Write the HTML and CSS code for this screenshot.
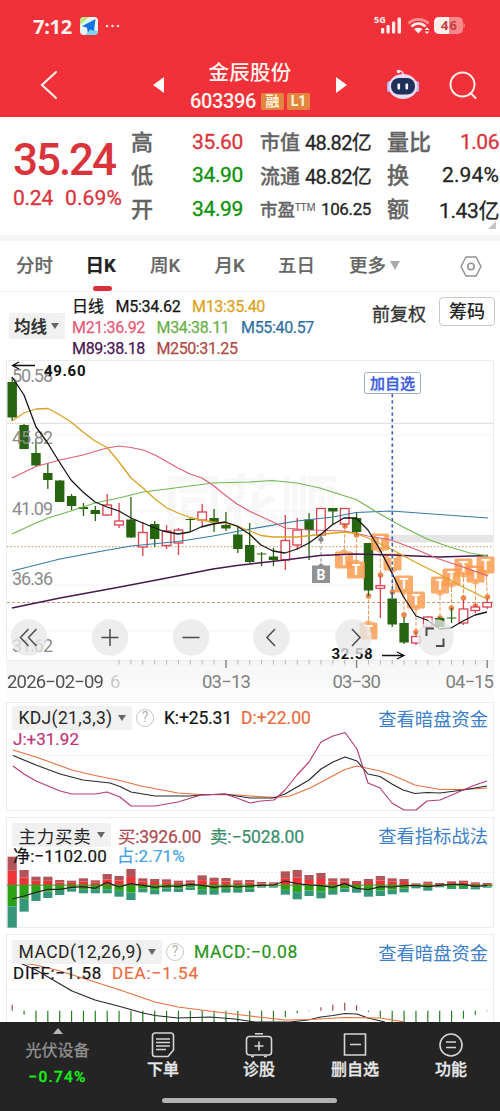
FILE: index.html
```html
<!DOCTYPE html>
<html lang="zh-CN">
<head>
<meta charset="utf-8">
<title>金辰股份 603396</title>
<link rel="stylesheet" href="styles.css">
</head>
<body>
<header class="top">
  <div class="status">
    <span class="time" data-w="39">7:12</span>
    <svg class="app" width="18" height="18" viewBox="0 0 18 18"><rect width="18" height="18" rx="4" fill="#e9f7f3"/><path d="M0 8V4a4 4 0 0 1 4-4h5z" fill="#b9e57d"/><path d="M5 18l6-6 7 2a4 4 0 0 1-4 4z" fill="#7cd3f2"/><path d="M15.5 2L2 9.3l5 1.4.8 5 2.4-3.2 3.8 1.2z" fill="#1673e6"/></svg>
    <svg class="dots" width="15" height="4" viewBox="0 0 15 4" fill="#ffd9d5"><circle cx="2" cy="2" r="1.3"/><circle cx="7.5" cy="2" r="1.3"/><circle cx="13" cy="2" r="1.3"/></svg>
    <svg class="signals" width="96" height="26" viewBox="370 13 96 26">
      <text x="374" y="22.5" class="g5">5G</text>
      <g fill="#fff0ec"><rect x="381" y="28" width="3.2" height="5.5" rx="1"/><rect x="386.5" y="25" width="3.2" height="8.5" rx="1"/><rect x="392" y="21.5" width="3.2" height="12" rx="1"/><rect x="397.6" y="17.5" width="3.4" height="16" rx="1"/></g>
      <g fill="none" stroke-width="2.6"><path d="M408.5 23.5c5.500-5.500 14.500-5.500 20 0" stroke="#f98f8b"/><path d="M411.500 26.500c4-4 10-4 14 0" stroke="#fff0ec"/></g><path d="M414 29q4.500-2.500 8.500 0l-4.200 4.500z" fill="#fff0ec"/><path d="M427 27.300l2.400 2.600h-4.800zM427 34l2.400-2.600h-4.800z" fill="#fff0ec"/>
      <rect x="434" y="17" width="29" height="17" rx="5" fill="#f8898a"/><path d="M449 17h-10a5 5 0 0 0-5 5v7a5 5 0 0 0 5 5h10z" fill="#fff0ec"/><path d="M463.500 22.500q3 3 0 6z" fill="#f8898a"/>
      <text x="441" y="30" class="batt" textLength="16">46</text>
    </svg>
  </div>
  <nav class="nav">
    <svg width="18" height="30" viewBox="0 0 18 30" fill="none" stroke="#fff0e8" stroke-width="2.200" stroke-linecap="round"><path d="M16 2L2 15l14 13"/></svg>
    <svg class="c3" width="11" height="16" viewBox="0 0 11 16"><path d="M11 0v16L0 8z" fill="#fff8f4"/></svg>
    <div class="name">
      <h1 data-w="83">金辰股份</h1>
      <div class="code"><span data-w="66">603396</span><b class="badge">融</b><b class="badge">L1</b></div>
    </div>
    <svg width="11" height="16" viewBox="0 0 11 16"><path d="M0 0v16l11-8z" fill="#fff8f4"/></svg>
    <svg width="34" height="32" viewBox="0 0 34 32"><path d="M12 2q5-.5 5.500 4" fill="none" stroke="#e9d9ee" stroke-width="1.500"/><circle cx="12.500" cy="2.500" r="1.800" fill="#f4e7f2"/><rect x="1" y="12" width="5" height="11" rx="2.500" fill="#b9b4ee"/><rect x="28" y="12" width="5" height="11" rx="2.500" fill="#b9b4ee"/><ellipse cx="17" cy="17.500" rx="14.500" ry="12.500" fill="#e8dcf4"/><rect x="5" y="9" width="24" height="16.500" rx="8" fill="#1d315b"/><rect x="11.500" y="14.500" width="2.600" height="6" rx="1" fill="#fff"/><rect x="19.500" y="14.500" width="2.600" height="6" rx="1" fill="#fff"/></svg>
    <svg width="28" height="28" viewBox="0 0 28 28" fill="none" stroke="#fff0e8" stroke-width="2"><circle cx="13.500" cy="13.500" r="12"/><path d="M21.500 22l5 5" stroke-linecap="round"/></svg>
  </nav>
</header>

<section class="quote">
  <div class="price up">
    <strong data-w="102">35.24</strong>
    <div class="change"><span data-w="40">0.24</span><span data-w="57">0.69%</span></div>
  </div>
  <dl class="col a"><dt>高</dt><dd class="up" data-w="51">35.60</dd><dt>低</dt><dd class="down" data-w="51">34.90</dd><dt>开</dt><dd class="down" data-w="51">34.99</dd></dl>
  <dl class="col b"><dt>市值</dt><dd data-w="66">48.82亿</dd><dt>流通</dt><dd data-w="66">48.82亿</dd><dt class="pe">市盈<sup>TTM</sup></dt><dd class="small" data-w="50">106.25</dd></dl>
  <dl class="col c"><dt>量比</dt><dd class="up" data-w="39">1.06</dd><dt>换</dt><dd data-w="57">2.94%</dd><dt>额</dt><dd data-w="60">1.43亿</dd></dl>
  <i class="corner"></i>
</section>

<nav class="tabs">
  <span>分时</span><span class="on">日K</span><span>周K</span><span>月K</span><span>五日</span><span class="more">更多<i></i></span>
  <svg width="22" height="21" viewBox="0 0 22 21" fill="none" stroke="#929292" stroke-width="1.500"><path d="M6 1h10l5 9.500-5 9.500H6l-5-9.500z" stroke-linejoin="round"/><circle cx="11" cy="10.500" r="3.200"/></svg>
</nav>

<section class="legend">
  <button class="chip ma">均线<i></i></button>
  <div class="mas">
    <div><span class="k" data-w="32">日线</span><span class="k" data-w="65">M5:34.62</span><span class="m13" data-w="73">M13:35.40</span></div>
    <div><span class="m21" data-w="73">M21:36.92</span><span class="m34" data-w="73">M34:38.11</span><span class="m55" data-w="73">M55:40.57</span></div>
    <div><span class="m89" data-w="73">M89:38.18</span><span class="m250" data-w="81">M250:31.25</span></div>
  </div>
  <span class="adj">前复权</span>
  <button class="chips">筹码</button>
</section>

<svg id="kline" width="500" height="344" viewBox="0 356 500 344"></svg>

<section class="panel p1">
  <svg id="kdj" width="500" height="115" viewBox="0 700 500 115"></svg>
  <div class="head">
    <button class="chip wide"><span data-w="94">KDJ(21,3,3)</span><i></i></button><em>?</em>
    <span class="k" data-w="68">K:+25.31</span><span class="or" data-w="70">D:+22.00</span><a>查看暗盘资金</a>
  </div>
  <div class="sub"><span class="pk" data-w="66">J:+31.92</span></div>
</section>
<section class="panel p2">
  <svg id="flow" width="500" height="117" viewBox="0 815 500 117"></svg>
  <div class="head">
    <button class="chip wide"><span data-w="73">主力买卖</span><i></i></button>
    <span class="buy" data-w="83">买:3926.00</span><span class="sell" data-w="94">卖:−5028.00</span><a>查看指标战法</a>
  </div>
  <div class="sub"><span class="k" data-w="94">净:−1102.00</span><span class="bl" data-w="68">占:2.71%</span></div>
</section>
<section class="panel p3">
  <svg id="macd" width="500" height="90" viewBox="0 932 500 90"></svg>
  <div class="head">
    <button class="chip wide"><span data-w="124">MACD(12,26,9)</span><i></i></button><em>?</em>
    <span class="gr" data-w="104">MACD:−0.08</span><a>查看暗盘资金</a>
  </div>
  <div class="sub"><span class="k" data-w="89">DIFF:−1.58</span><span class="or" data-w="87">DEA:−1.54</span></div>
</section>

<footer class="bottom">
  <div class="actions">
    <div class="sector"><i></i><span>光伏设备</span><b data-w="58">−0.74%</b></div>
    <div><svg width="24" height="26" viewBox="0 0 24 26"><path d="M4 1h16a2.500 2.500 0 0 1 2.500 2.500V18l-5.500 6.500H4A2.500 2.500 0 0 1 1.500 22V3.500A2.500 2.500 0 0 1 4 1zM5 7h14M5 10.500h14M5 14h14M5 17.500h10"/></svg><span>下单</span></div>
    <div><svg width="28" height="26" viewBox="0 0 28 26"><rect x="1.500" y="4.500" width="25" height="18.500" rx="3"/><path d="M10 1.700h8M14 9.500v9M9.500 14h9M6 24.500h3M19 24.500h3"/></svg><span>诊股</span></div>
    <div><svg width="24" height="26" viewBox="0 0 24 26"><path d="M1.500 2h21v21h-21zM7 12.500h11"/></svg><span>删自选</span></div>
    <div><svg width="26" height="26" viewBox="0 0 26 26"><circle cx="13" cy="13" r="11"/><path d="M8 10h10M8 15.500h10"/></svg><span>功能</span></div>
  </div>
  <div class="home"></div>
</footer>
<script src="charts.js"></script>
</body>
</html>
```
FILE: styles.css
```css
* { box-sizing: border-box; }
body { margin: 0; width: 500px; height: 1111px; overflow: hidden; background: #fff; color: #333; font-family: Roboto, "Noto Sans CJK SC", sans-serif; }
button { border: 0; font: inherit; color: inherit; padding: 0; }
svg { display: block; }
span, a, h1, strong { white-space: nowrap; }
.up { color: #d9343c; }
.down { color: #0c920c; }

.top { height: 117px; background: #f13139; color: #fff4ee; }
.status { height: 52px; display: flex; align-items: center; padding: 0 34px 0 33px; }
.time { font: 700 20px "Noto Sans", sans-serif; }
.app { margin-left: 8px; }
.dots { margin-left: 7px; }
.signals { margin-left: auto; }
.g5 { font: 700 9px "Noto Sans", sans-serif; fill: #fff0ec; }
.batt { font: 700 13px "Noto Sans", sans-serif; fill: #c83c40; }
.nav { height: 65px; display: grid; grid-template-columns: 97px 91px 124px 59px 64px 56px; justify-items: center; align-items: center; }
.nav .c3 { margin-left: 31px; }
.name { display: flex; flex-direction: column; align-items: center; padding-top: 5px; }
.name h1 { margin: 0; font-size: 20.5px; font-weight: 500; line-height: 28px; }
.code { display: flex; align-items: center; gap: 3px; font-size: 20px; font-weight: 500; line-height: 29px; height: 29px; }
.code span { margin-right: 2px; }
.badge { width: 23px; height: 17px; border-radius: 2px; background: #e2863f; color: #fff3dc; font-size: 14px; line-height: 17px; text-align: center; }

.quote { height: 124px; border-bottom: 6px solid #f5f5f5; display: flex; padding-top: 8px; position: relative; }
.price { width: 119px; padding: 8px 0 0 13px; }
.price strong { display: block; font-size: 44px; line-height: 54px; font-weight: 500; }
.change { display: flex; gap: 12px; font-size: 21px; line-height: 23px; -webkit-text-stroke: .3px; }
.col { margin: 0; display: grid; grid-template-columns: auto auto; grid-auto-rows: 33.5px; justify-content: space-between; align-items: center; color: #262626; }
.col dt { color: #636363; font-size: 20px; font-weight: 500; white-space: nowrap; -webkit-text-stroke: .3px; }
.col dd { margin: 0; font-size: 21px; text-align: right; justify-self: end; white-space: nowrap; -webkit-text-stroke: .3px; }
.col dd.up { color: #d9343c; }
.col dd.down { color: #0c920c; }
.a { width: 112px; margin-left: 12px; }
.a dt, .c dt { font-size: 22px; padding-bottom: 4px; }
.b { width: 111px; margin-left: 17px; }
.b dt { width: 40px; }
.b dd { font-size: 20px; }
.b .pe { font-size: 17.5px; }
.b sup { font-size: 10px; line-height: 1; vertical-align: 5px; font-family: "Noto Sans"; -webkit-text-stroke: 0; }
.b dd.small { font-size: 17px; }
.c { width: 112px; margin-left: 16px; }
.corner { position: absolute; right: 4px; bottom: 6px; border-left: 8px solid transparent; border-bottom: 8px solid #c4c4c4; }

.tabs { height: 51px; border-bottom: 1px solid #f3f3f3; display: flex; align-items: center; padding-left: 16px; font-size: 18.5px; font-weight: 500; color: #666; -webkit-text-stroke: .2px; }
.tabs span { width: 63.5px; height: 50px; margin-right: 1px; line-height: 50px; }
.tabs .on { color: #222; font-weight: 700; position: relative; margin-left: 5px; }
.tabs .on::after { content: ""; position: absolute; left: 7px; bottom: 0; width: 19px; height: 5px; border-radius: 3px; background: #d9303b; }
.tabs span:nth-child(5) { width: 70px; margin-left: -1px; }
.tabs .more { width: 110px; }
.more i { display: inline-block; margin-left: 4px; border: 5px solid transparent; border-top: 9px solid #aaa; border-bottom: 0; vertical-align: 2px; }

.legend { height: 64px; display: flex; align-items: flex-start; padding-top: 4px; }
.chip { background: #f1f1f1; display: flex; align-items: center; gap: 5px; border-radius: 2px; }
.chip i { border: 4.500px solid transparent; border-top: 6px solid #666; border-bottom: 0; }
.ma { margin: 17px 0 0 9px; width: 56px; height: 26px; padding-left: 5px; font-size: 16.5px; font-weight: 700; color: #333; gap: 4px; }
.mas { margin-left: 7px; width: 300px; font-size: 16px; line-height: 21px; height: 63px; -webkit-text-stroke: .25px; }
.mas div { display: flex; gap: 11.5px; height: 21px; }
.k { color: #141414; } .m13 { color: #dca21b; } .m21 { color: #e35c76; } .m34 { color: #6ab04b; } .m55 { color: #2f6f9f; } .m89 { color: #4a1757; } .m250 { color: #ad4a45; }
.adj { font-size: 18px; line-height: 37px; color: #333; width: 55px; -webkit-text-stroke: .3px; }
.chips { margin-left: 12px; margin-top: 1px; width: 56px; height: 29px; border: 1px solid #c9c9c9; border-radius: 4px; background: #fff; color: #222; font-size: 18px; font-weight: 500; line-height: 26px; }

.panel { display: grid; }
.panel > svg { grid-area: 1 / 1; }
.panel .head { grid-area: 1 / 1; margin: 6px 12px 0; height: 24px; display: flex; align-items: center; font-size: 17.5px; z-index: 1; }
.panel .sub { grid-area: 1 / 1; margin: 29px 0 0 13px; height: 20px; line-height: 20px; display: flex; font-size: 17px; gap: 10px; }
.panel .head > span, .panel .sub { -webkit-text-stroke: .2px; }
.p1 { height: 115px; } .p2 { height: 117px; } .p3 { height: 90px; overflow: hidden; }
.p2 .head, .p3 .head { margin-top: 8px; }
.p2 .sub, .p3 .sub { margin-top: 31px; }
.wide { height: 24px; padding: 0 6.500px; color: #262626; }
.head em { width: 18px; height: 18px; border: 1.500px solid #c7c7c7; border-radius: 50%; color: #b5b5b5; font: 14px/15px Roboto; text-align: center; margin: 0 10px 0 4px; }
.head > span { margin-right: 9px; }
.p2 .wide { margin-right: 7px; }
.head a { margin-left: auto; color: #3e80c8; font-size: 18.300px; }
.or { color: #ec6b3e; } .pk { color: #be3578; } .buy { color: #ad4c4e; } .sell { color: #388e68; } .bl { color: #43a3e6; } .gr { color: #2a941c; }

.bottom { height: 89px; background: #242424; color: #e9e9e9; }
.actions { display: grid; grid-template-columns: 115px 96px 96px 96px 96px; height: 76px; }
.actions div { display: flex; flex-direction: column; align-items: center; padding-top: 10px; font-size: 16px; font-weight: 500; line-height: 22px; -webkit-text-stroke: .3px; }
.actions svg { fill: none; stroke: #d5d5d5; stroke-width: 1.600; margin-bottom: 1px; }
.actions .sector { padding-top: 6px; color: #929292; font-weight: 400; }
.sector i { border: 5.500px solid transparent; border-bottom: 6px solid #b7b7b7; border-top: 0; margin-bottom: 6px; }
.sector b { color: #16ee16; font-size: 15.500px; font-weight: 500; margin-top: 4px; }
.home { width: 175px; height: 5px; border-radius: 3px; background: #b2b2b2; margin-left: 162px; }

.axis { font: 18px Roboto; fill: #8c8c8c; }
.date { font: 18.500px Roboto; fill: #808080; }
.mark { font: 700 15px Roboto; fill: #111; }
.pin { font: 700 14px Roboto; fill: #fff; text-anchor: middle; }
.add { font: 500 15px "Noto Sans CJK SC"; fill: #3c5cdb; stroke: #3c5cdb; stroke-width: .3; }
.water { font: 700 58px "Noto Sans CJK SC"; fill: #f8f8f8; }
```
FILE: charts.js
```js
document.querySelectorAll('[data-w]').forEach(function (el) {
  var range = document.createRange();
  range.selectNodeContents(el);
  var w = range.getBoundingClientRect().width;
  el.style.letterSpacing = ((+el.dataset.w - w) / el.textContent.length) + 'px';
});

function X(i) { return 12.2 + i * 11.875; }
function rect(x, y, w, h, fill, extra) { return '<rect x="' + x + '" y="' + y + '" width="' + w + '" height="' + h + '" fill="' + fill + '" ' + (extra || '') + '/>'; }
function seg(x1, y1, x2, y2, c, extra) { return '<path d="M' + x1 + ' ' + y1 + 'L' + x2 + ' ' + y2 + '" fill="none" stroke="' + c + '" ' + (extra || '') + '/>'; }
function poly(p, c, w) { return '<polyline points="' + p + '" fill="none" stroke="' + c + '" stroke-width="' + (w || 1.15) + '" stroke-linejoin="round"/>'; }
function text(x, y, w, cls, s) { return '<text x="' + x + '" y="' + y + '" textLength="' + w + '" class="' + cls + '">' + s + '</text>'; }
function frame(y, h) { return rect(6.5, y, 487, h, 'none', 'stroke="#ececec"'); }

// Candles: direction, body top, body bottom, high, low
var candles = [
  [0,382,417.5,377,421],[0,425,449,424,449],[0,453,465.5,441,466],[0,473,480,463,489],[0,480.5,502,480,502],[0,496,506,494,510],[0,507,509,503,516],[0,510,514,506,521],
  [1,505,515,494,516],[1,521,525,503,528],[0,519.5,537.5,497,538],[1,532.5,547,522,556],[0,524,539,521,547],[1,531,545.5,525,549],[1,530,543,528,555],[0,519,520,518,531],
  [1,512,520,504,526],[0,518,522.5,509,532],[0,525,528.5,512,531],[0,534.5,549,526,553],[0,545,562,523,563],[0,553.5,554.5,552,566],[0,556.5,560,548,566],[1,540.5,560,515,570],
  [1,530,545,518,550],[0,519.5,530,513,560],[1,508.5,535,508,535],[0,508,511.5,508,524],[1,508.5,524,508,527],[0,518,532,513,535],[0,543,590.5,543,596],[1,585.7,588.3,575,618],
  [0,598.5,624.5,592,627],[0,623,642.5,617,644],[1,636.5,643,632,645],[1,617,627,616,629],[0,618,627,617,627],[0,617.5,618.5,608,623],[1,609,623,600,625],[1,607,610.5,604,613],[1,602.5,607,598,609]
];
var s = '<defs><linearGradient id="axisfade" x2="0" y2="1"><stop stop-color="#f5f5f5"/><stop offset="1" stop-color="#fdfdfd"/></linearGradient></defs>';
s += rect(6, 660, 488, 40, 'url(#axisfade)') + frame(360.5, 300);
s += text(164, 523, 174, 'water', '同花顺');
s += seg(7, 423.3, 493, 423.3, '#dcdce0') + [435, 511, 585, 631].map(function (y) { return seg(7, y, 493, y, '#f3f3f3'); }).join('');
s += rect(376, 535, 117, 7.500, '#e5e5e5');
s += seg(7, 546.700, 493, 546.700, '#c99055', 'stroke-dasharray="1.5 2"') + seg(7, 602.500, 493, 602.500, '#c99984', 'stroke-dasharray="3 2"');

// Trade pins: box centre, dot height, anchor x
[[344,560,526,345],[356,570,535,356.500],[368.500,631,596,368.500],[380,542,575,380.500],[392.500,562,592,392.500],[404,584,615,404],[416,600,632,416],[440,585,618,440],[451.500,577,608,451.500],[463.500,567,598,463.500],[475.500,574,606,475.500],[485.500,565,597,487.500]].forEach(function (p) {
  s += seg(p[0], p[1], p[3], p[2], '#ed9b59', 'stroke-dasharray="4 1.500"') + '<circle cx="' + p[3] + '" cy="' + p[2] + '" r="2.800" fill="#e98a4d"/>';
});
candles.forEach(function (c, i) {
  var x = X(i), col = c[0] ? '#dc4150' : '#276410';
  if (c[0]) s += seg(x, c[3], x, c[1], col, 'stroke-width="1.300"') + seg(x, c[2], x, c[4], col, 'stroke-width="1.300"') + rect(x - 4.300, c[1], 8.600, c[2] - c[1], '#fff', 'stroke="' + col + '" stroke-width="1.300"');
  else s += seg(x, c[3], x, c[4], col, 'stroke-width="1.300"') + rect(x - 4.700, c[1], 9.400, c[2] - c[1], col);
});
[[50.58,381.500],[45.82,443.500],[41.09,515],[36.36,585],[31.62,652]].forEach(function (a) { s += text(12, a[1], 41, 'axis', a[0].toFixed(2)); });
[[344,560,-1],[356,570,-1],[368.500,631,-1],[380,542,1],[392.500,562,1],[404,584,1],[416,600,1],[440,585,1],[451.500,577,1],[463.500,567,1],[475.500,574,1],[485.500,565,1]].forEach(function (p) {
  var x = p[0], y = p[1], d = p[2];
  s += rect(x - 9, y - 8.500, 18, 17, '#fa9a4d', 'rx="1.500" opacity=".82"') + '<path d="M' + (x - 5) + ' ' + (y + d * 8.500) + 'h10l-5 ' + d * 2.500 + 'z" fill="#fa9a4d" opacity=".82"/>' + '<text x="' + x + '" y="' + (y + 5) + '" class="pin">T</text>';
});
s += seg(321, 540, 321, 565, '#929292', 'stroke-dasharray="4 2"') + '<path d="M321 535l3 5-3 2.500-3-2.500z" fill="#888"/>' + '<path d="M312 565.500h6l3-2.500 3 2.500h6V583h-18z" fill="#929292"/>' + '<text x="321" y="579.500" class="pin">B</text>';
s += poly('12,608 60,598 120,587 167,578 213,569 237,565.500 250,564 285,560 320,555.500 356,554 391,555 440,557 488,555.500', '#47194e', 1.400);
s += poly('12,571 60,559 97,552 131,546 178,541.500 213,536 250,529 297,521 333,517 356,512.500 391,511 488,518', '#357aa8');
s += poly('12,534 36,523 48,518 71,511 95,503 119,498 143,492 167,489 190,486 213,483 250,482 272,480.500 297,483 320,488 356,499.500 380,514 403,527 427,539 451,547.500 470,553 488,556', '#70b850');
s += poly('12,478 36,466.500 60,460 83,455 107,448 119,446 131,447.500 143,450 155,455 178,468 190,474 202,478 214,486 225,495 237,504 250,511.500 273,522 285,528 309,530 345,531 368,536 391,540 415,549 439,559 463,567 488,576', '#df6076');
s += poly('12,421 24,413 36,409 48,408.500 60,415 71,422 83,432 95,441 107,447.500 119,462 131,478 143,488 155,499 167,508 178,513 190,517.500 201,520 213,522 225,523 237,526 250,531 261,535.500 273,537 297,537 320,534.500 344,532 356,533.500 368,538 391,549 415,562 440,574.500 463,587 487,599', '#d9a225', 1.300);
s += poly('12,377 24,395 36,427 47,442 60,463 71,480 83,492 95,502 107,507 119,511 131,518 150,526 163,531 178,534 190,532 201,527 213,524 225,522 237,526 250,534.500 261,545 273,551 285,553 297,549 309,543 320,535 332,525 344,518 356,518 368,530 379,548 391,571 403,596 416,616 427,620 440,629 451,628 463,621 475,615 487,612', '#161616', 1.300);
s += seg(392.300, 394, 392.300, 600, '#3c5fb4', 'stroke-width="1.600" stroke-dasharray="3.200 3"') + rect(364.500, 372.500, 56, 21, '#fff', 'rx="2" stroke="#9eacd0"') + text(370, 388.500, 45, 'add', '加自选');
s += '<path d="M35 365.500H12.500M19 362l-6.500 3.500 6.500 3.500" fill="none" stroke="#111" stroke-width="1.300"/>' + text(44, 375.500, 41.500, 'mark', '49.60');
s += text(331.500, 658.500, 41, 'mark', '32.58') + '<path d="M382 655.500h22M397 652l7 3.500-7 3.500" fill="none" stroke="#111" stroke-width="1.300"/>';
[29,110,191,271.500,353.500,435.500].forEach(function (x) { s += '<circle cx="' + x + '" cy="637.500" r="18.300" fill="#e8e8e8" opacity=".78"/>'; });
s += '<g fill="none" stroke="#4c4c4c" stroke-width="1.500"><path d="M28.500 629l-8 8.500 8 8.500M36.500 629l-8 8.500 8 8.500M101.500 637.500h17M110 629v17M182.500 637.500h17M275 629l-8 8.500 8 8.500M352 629l8 8.500-8 8.500"/><path d="M426.500 636v-7.500h7.500M436 646h7.500v-7.500" stroke-width="2"/></g>';
for (var i = 9; i <= 40; i++) { var major = i === 18 || i === 29 || i === 40; s += seg(X(i), 660, X(i), major ? 668 : 664.500, major ? '#8b8b8b' : '#b7b7b7', major ? 'stroke-width="1.500"' : ''); }
s += '<g opacity=".4">' + text(110, 687.500, 9, 'date', '6') + '</g><g style="filter:brightness(.65)">' + text(7, 687.500, 97, 'date', '2026−02−09') + '</g>' + text(202, 687.500, 49, 'date', '03−13') + text(332.500, 687.500, 48.500, 'date', '03−30') + text(445.500, 687.500, 48.500, 'date', '04−15');
document.getElementById('kline').innerHTML = s;

s = frame(702.5, 108) + seg(7, 755.5, 493, 755.5, '#ececec', 'stroke-dasharray="2 2"');
s += poly('13,750 36,757 72,770 95,775.500 120,780.500 141,786 178,793 200,794.500 237,795 250,796 277,797.500 290,796 310,788 345,769.500 357,766 380,771 392,775 415,785 440,789.500 463,789.500 487,788', '#e7703e');
s += poly('13,755.500 36,765 60,774 83,780 110,783 120,786.500 131,792 155,796 190,796 201,795 225,794 237,796 250,798 273,798 285,794 309,780 321,769 333,762 345,757 357,761 368,774 380,776.500 392,784 403,790 415,793.500 427,792.500 440,793 463,790 487,786', '#26282e');
s += poly('13,766 24,774 36,781 60,791 72,794 95,794 107,792 120,797 131,806 155,806 178,802 201,795 225,794 237,798 250,803 261,801 274,800 285,790 297,775 309,762 321,742 333,736 345,732.500 357,749 368,783 380,788 392,803 404,810 416,810 427,801 440,800 452,795 463,790 475,785 487,781', '#b53c7b');
document.getElementById('kdj').innerHTML = s;

// Net flow bars and line, in thirds of a pixel below y = 700
var tops = [470,510,530,530,540,542,535,541,522,528,507,535,537,538,542,541,526,533,534,541,540,546,547,514,510,525,519,535,535,543,537,528,535,537,550,545,549,544,542,547,549];
var bots = [683,635,603,594,585,575,580,580,580,590,600,577,583,575,576,570,584,584,578,578,576,563,563,584,598,588,595,584,576,578,590,588,583,577,565,572,562,567,567,568,563];
var net = [597,588,577,568,568,562,560,565,547,561,551,556,562,558,559,553,556,562,558,561,558,556,555,543,551,555,557,562,551,565,569,560,561,557,557,560,556,553,553,559,557];
s = frame(817.5, 110) + seg(7, 872.500, 493, 872.500, '#ececec', 'stroke-dasharray="2 2"');
tops.forEach(function (t, i) {
  var x = X(i) - 4.600, u = (555 - t) / 6, d = (bots[i] - 555) / 6;
  s += rect(x, 885 - 2 * u, 9.200, u, '#b2555a') + rect(x, 885 - u, 9.200, u, '#ed3538') + rect(x, 885, 9.200, d, '#2ba116') + rect(x, 885 + d, 9.200, d, '#359679');
});
s += seg(7, 885.200, 493, 885.200, '#459b27') + poly(net.map(function (v, i) { return X(i) + ',' + (700 + v / 3); }).join(' '), '#222', 1.200);
document.getElementById('flow').innerHTML = s;

var ends = [-18,12,40,40,40,40,40,40,40,40,40,40,40,40,40,40,40,40,40,40,40,40,32,20,8,2,-10,-18,-24,-17,4,21,40,40,40,40,40,40,24,12,2];
s = frame(934.5, 100) + seg(7, 989.500, 493, 989.500, '#f0f0f0', 'stroke-dasharray="2 2"');
ends.forEach(function (v, i) { s += seg(X(i), 1010.700, X(i), 1010.700 + v / 3, v < 0 ? '#a94b50' : '#287e26', 'stroke-width="1.200"'); });
s += poly('13,960 36,970 60,984 72,991 95,1000 120,1006.500 143,1013 155,1015.500 178,1018 210,1017 235,1019 255,1022 290,1022 308,1020 321,1017 333,1015.500 345,1013.500 357,1014 368,1018 385,1022', '#25272c');
s += poly('13,962 36,965 60,971 95,982 120,990 155,1002 178,1007 213,1011.500 250,1016 285,1020 310,1019.500 345,1017.500 380,1018 405,1022', '#e7703e');
document.getElementById('macd').innerHTML = s;
```
